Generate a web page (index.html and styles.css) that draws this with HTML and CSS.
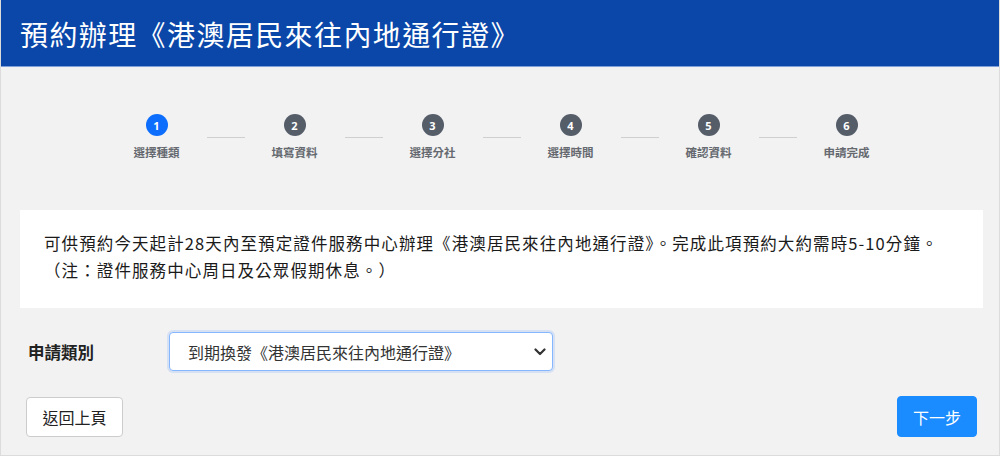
FILE: index.html
```html
<!DOCTYPE html>
<html lang="zh-Hant">
<head>
<meta charset="utf-8">
<title>預約辦理《港澳居民來往內地通行證》</title>
<link rel="stylesheet" href="styles.css">
</head>
<body>
<div class="page">
  <header class="topbar">
    <h1 class="title">預約辦理《港澳居民來往內地通行證》</h1>
  </header>
  <main class="content">
    <ol class="steps">
      <li class="step active"><span class="dot">1</span><span class="step-label">選擇種類</span></li>
      <li class="connector"></li>
      <li class="step"><span class="dot">2</span><span class="step-label">填寫資料</span></li>
      <li class="connector"></li>
      <li class="step"><span class="dot">3</span><span class="step-label">選擇分社</span></li>
      <li class="connector"></li>
      <li class="step"><span class="dot">4</span><span class="step-label">選擇時間</span></li>
      <li class="connector"></li>
      <li class="step"><span class="dot">5</span><span class="step-label">確認資料</span></li>
      <li class="connector"></li>
      <li class="step"><span class="dot">6</span><span class="step-label">申請完成</span></li>
    </ol>

    <div class="notice">
      <p>可供預約今天起計28天內至預定證件服務中心辦理《港澳居民來往內地通行證》。完成此項預約大約需時5-10分鐘。</p>
      <p>（注：證件服務中心周日及公眾假期休息。）</p>
    </div>

    <div class="form-row">
      <label class="field-label" for="type">申請類別</label>
      <div class="select-wrap">
        <select id="type" class="select">
          <option>到期換發《港澳居民來往內地通行證》</option>
        </select>
        <svg class="chevron" width="12" height="8" viewBox="0 0 12 8"><path d="M1.5 1.5 L6 6 L10.5 1.5" fill="none" stroke="#333" stroke-width="2.2" stroke-linecap="round" stroke-linejoin="round"/></svg>
      </div>
    </div>

    <div class="actions">
      <button class="btn btn-back" type="button">返回上頁</button>
      <button class="btn btn-next" type="button">下一步</button>
    </div>
  </main>
</div>
</body>
</html>
```

FILE: styles.css
```css
* { box-sizing: border-box; }

html, body {
  margin: 0;
  padding: 0;
  background: #ffffff;
}

body {
  font-family: "Noto Sans CJK TC", "Noto Sans", "Liberation Sans", sans-serif;
  color: #212529;
}

.page {
  width: 1000px;
  border-left: 1px solid #dcdcdc;
  border-right: 1px solid #dcdcdc;
  border-bottom: 1px solid #dcdcdc;
  background: #f2f2f2;
}

.topbar {
  background: #0a47a9;
  height: 67px;
  border-bottom: 1px solid #7fa0d6;
  display: flex;
  align-items: center;
  padding: 2px 0 0 19px;
}

.title {
  margin: 0;
  color: #ffffff;
  font-size: 28px;
  font-weight: 400;
  line-height: 1;
  letter-spacing: 1.4px;
}

.content {
  padding: 47px 16px 18px 19px;
}

.steps {
  list-style: none;
  margin: 0;
  padding: 0;
  display: flex;
  align-items: center;
  justify-content: center;
}

.step {
  width: 60px;
  display: flex;
  flex-direction: column;
  align-items: center;
  gap: 8px;
}

.dot {
  width: 22px;
  height: 22px;
  border-radius: 50%;
  background: #555d69;
  color: #ffffff;
  font-family: "Open Sans", "Liberation Sans", sans-serif;
  font-size: 11px;
  font-weight: 700;
  display: flex;
  align-items: center;
  justify-content: center;
}

.step.active .dot {
  background: #0d6efd;
}

.step-label {
  font-size: 11.5px;
  font-weight: 700;
  color: #666a70;
  line-height: 16px;
  white-space: nowrap;
}

.connector {
  width: 38px;
  height: 1px;
  background: #cfcfcf;
  margin: 0 20px;
}

.notice {
  margin-top: 50px;
  background: #ffffff;
  padding: 20px 24px 24px 24px;
  font-size: 16.5px;
  line-height: 27px;
  color: #1a1a1a;
  letter-spacing: 1.1px;
}

.notice p {
  margin: 0;
  white-space: nowrap;
}

.form-row {
  margin-top: 24px;
  display: flex;
  align-items: center;
}

.field-label {
  width: 149px;
  padding-left: 8px;
  font-size: 16.5px;
  font-weight: 700;
  color: #222222;
}

.select-wrap {
  position: relative;
  width: 384px;
}

.select {
  width: 100%;
  height: 39px;
  appearance: none;
  -webkit-appearance: none;
  border: 1px solid #86b7fe;
  border-radius: 4px;
  background: #ffffff;
  box-shadow: 0 0 0 2px rgba(13, 110, 253, 0.12);
  padding: 0 36px 0 18px;
  font-family: "Noto Sans CJK TC", "Noto Sans", sans-serif;
  font-size: 16px;
  color: #333333;
}

.chevron {
  position: absolute;
  right: 7px;
  top: 16px;
  pointer-events: none;
}

.actions {
  margin-top: 25px;
  display: flex;
  justify-content: space-between;
  align-items: center;
  padding-left: 6px;
  padding-right: 6px;
}

.btn {
  font-family: "Noto Sans CJK TC", "Noto Sans", sans-serif;
  font-size: 16px;
  height: 40px;
  border-radius: 4px;
  cursor: pointer;
}

.btn-back {
  width: 97px;
  background: #ffffff;
  border: 1px solid #cccccc;
  color: #222222;
}

.btn-next {
  width: 80px;
  height: 41px;
  background: #1a8cff;
  border: 1px solid #1a8cff;
  color: #ffffff;
}
```
